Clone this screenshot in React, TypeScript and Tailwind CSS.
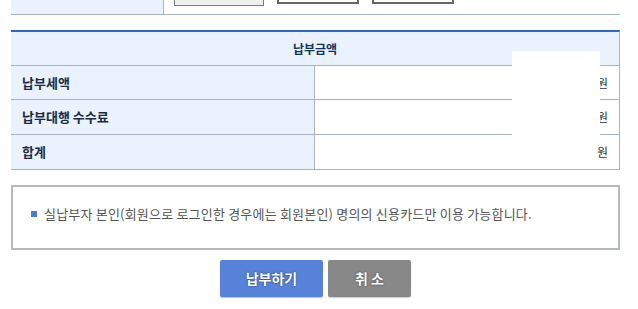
import React from "react";

export default function App() {
  const font = { fontFamily: '"Noto Sans CJK KR", "Noto Sans", sans-serif' };
  const rows = ["납부세액", "납부대행 수수료", "합계"];
  return (
    <div className="relative w-[638px] h-[309px] bg-white overflow-hidden text-[12px]" style={font}>
      <div className="ml-[11px] w-[609px]">
        {/* top cut row */}
        <div className="flex h-[15px] border-b border-[#a9b5c6]">
          <div className="w-[153px] bg-[#eaf2fd] border-r border-[#a9b5c6]" />
          <div className="flex items-start pl-[10px]">
            <div className="w-[90px] h-[6px] bg-[#efefef] border border-t-0 border-[#7a7a7a]" />
            <div className="ml-[13px] w-[82px] h-[4px] bg-white border-2 border-t-0 border-[#666]" />
            <div className="ml-[13px] w-[82px] h-[4px] bg-white border-2 border-t-0 border-[#666]" />
          </div>
        </div>

        {/* amount table */}
        <div className="relative mt-[15px] border-t-2 border-[#2f67c2] border-r border-r-[#a9b5c6]">
          <div className="h-[34px] bg-[#eaf2fd] border-b border-[#a9b5c6] flex items-center justify-center font-bold text-[#12325e]">
            납부금액
          </div>
          {rows.map((r, i) => (
            <div key={r} className={`flex border-b border-[#a9b5c6] ${i === 0 ? "h-[34px]" : "h-[35px]"}`}>
              <div className="w-[304px] bg-[#eaf2fd] border-r border-[#a9b5c6] flex items-center pl-[11px] font-semibold text-[13px] text-[#1b2b45]">
                {r}
              </div>
              <div className="flex-1 flex items-center justify-end pr-[11px] text-[#333]">원</div>
            </div>
          ))}
          <div className="absolute left-[501px] top-[19px] w-[88px] h-[84px] bg-white" />
        </div>

        {/* notice */}
        <div className="mt-[15px] h-[65px] border-2 border-[#b5b9c6] flex items-center pl-[18px] pb-[7px] text-[13px] tracking-[0.2px] text-[#555]">
          <span className="w-[6px] h-[6px] bg-[#4a7ad6] mr-[7px]" />
          <span>실납부자 본인(회원으로 로그인한 경우에는 회원본인) 명의의 신용카드만 이용 가능합니다.</span>
        </div>

        {/* buttons */}
        <div className="mt-[10px] flex justify-center gap-[5px]">
          <button
            className="w-[103px] h-[37px] rounded-[2px] bg-[#5683d9] text-white font-bold text-[14px] shadow-[0_1px_1px_rgba(0,0,0,0.25)]"
            style={{ textShadow: "0 0 2px rgba(0,0,0,0.6)" }}
          >
            납부하기
          </button>
          <button
            className="w-[83px] h-[37px] rounded-[2px] bg-[#888888] text-white font-bold text-[14px] shadow-[0_1px_1px_rgba(0,0,0,0.2)]"
            style={{ textShadow: "0 0 2px rgba(0,0,0,0.6)" }}
          >
            취 소
          </button>
        </div>
      </div>
    </div>
  );
}
